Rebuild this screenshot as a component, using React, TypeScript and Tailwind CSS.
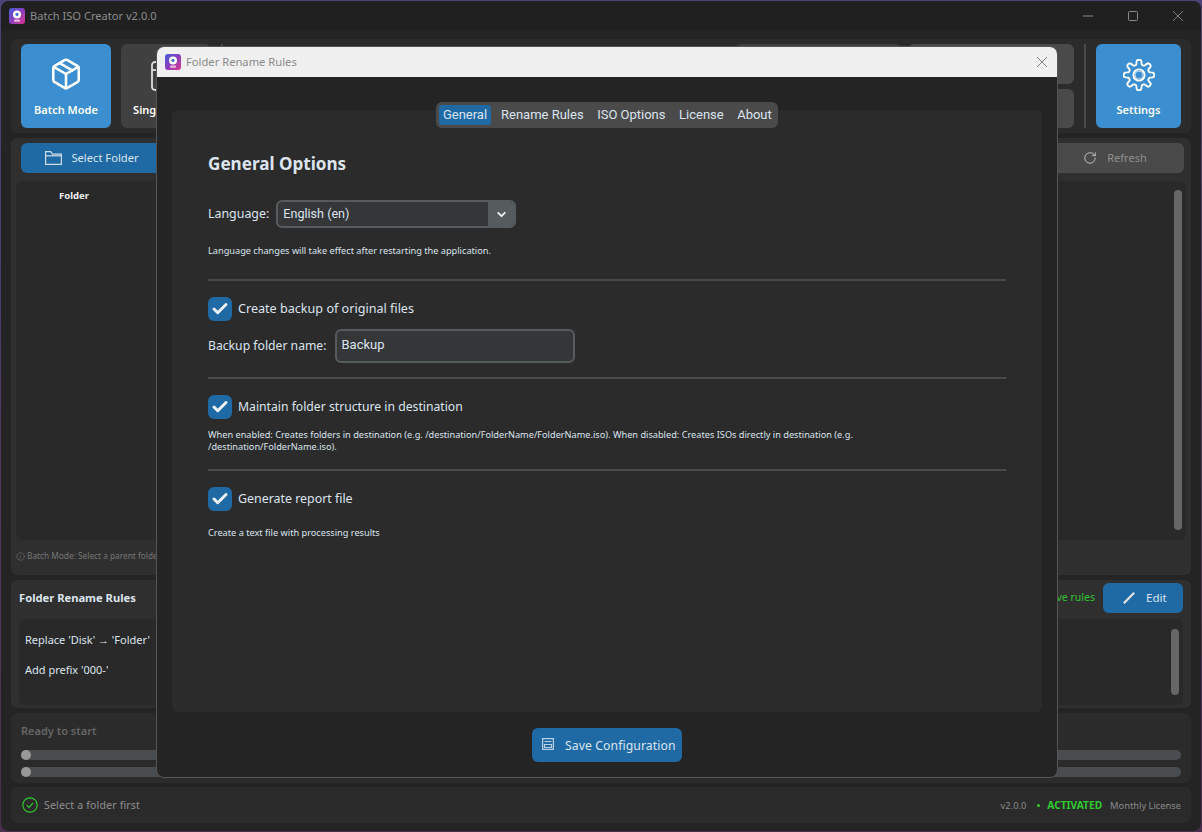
import { Check, ChevronDown, RotateCw, Package, Info } from 'lucide-react';

const ui = 'font-["Noto_Sans","Open_Sans",sans-serif]';
const rb = 'font-["Roboto",sans-serif]';

const Logo = () => (
  <div className="relative h-4 w-4 shrink-0 overflow-hidden rounded-[3px] bg-gradient-to-br from-[#3b5bd6] via-[#8a3cc0] to-[#e0288a]">
    <svg viewBox="0 0 16 16" className="h-4 w-4">
      <circle cx="8" cy="6.4" r="4" fill="#ffffff" />
      <circle cx="8" cy="6.4" r="1.6" fill="#4a6fe0" />
      <rect x="5" y="11.5" width="6" height="2.2" rx="0.6" fill="#e9b7d8" />
    </svg>
  </div>
);

// eight rounded lobes, sampled round the circle
const gearPath = Array.from({ length: 144 }, (_, i) => {
  const a = (i / 144) * Math.PI * 2;
  const r = 12.8 + 2.4 * (Math.tanh(2.2 * Math.cos(8 * a)) / Math.tanh(2.2));
  return `${i === 0 ? 'M' : 'L'}${(16 + r * Math.sin(a)).toFixed(2)} ${(16 - r * Math.cos(a)).toFixed(2)}`;
}).join('') + 'Z';

const GearIcon = () => (
  <svg viewBox="0 0 32 32" className="h-8 w-8" fill="none" stroke="#ffffff" strokeWidth="1.9" strokeLinejoin="round">
    <path d={gearPath} />
    <circle cx="16" cy="16" r="5.6" />
    <circle cx="16" cy="16" r="4" stroke="#bcd8f2" strokeWidth="1" />
  </svg>
);

const CheckRow = ({ label, size }: { label: string; size: string }) => (
  <div className="flex items-center gap-[6px]">
    <div className="flex h-6 w-6 items-center justify-center rounded-[6px] bg-[#1f6aa5]">
      <Check className="h-[18px] w-[18px] text-[#eef2f6]" strokeWidth={4} />
    </div>
    <span className={`${size} text-[#dce4ee] ${ui}`}>{label}</span>
  </div>
);

const Note = ({ children }: { children: React.ReactNode }) => (
  <p className={`text-[9.2px] leading-[12px] text-[#dce4ee] ${ui}`}>{children}</p>
);

const Divider = () => <div className="h-[2px] w-full bg-[#4a4a4a]" />;

const tabs = ['General', 'Rename Rules', 'ISO Options', 'License', 'About'];

const Modal = () => (
  <div className="absolute left-[156px] top-[46px] flex h-[732px] w-[902px] flex-col overflow-hidden rounded-[8px] border border-[#565656] bg-[#242424]">
    <div className="flex h-[30px] shrink-0 items-center bg-[#f0f0f0] pl-2 pr-[10px]">
      <Logo />
      <span className={`ml-[5px] text-[11.2px] text-[#8b8b8b] ${ui}`}>Folder Rename Rules</span>
      <svg viewBox="0 0 10 10" className="ml-auto h-[10px] w-[10px]" stroke="#777777" strokeWidth="0.9">
        <path d="M0 0L10 10M10 0L0 10" />
      </svg>
    </div>
    <div className="flex flex-1 flex-col items-center px-[15px]">
      <div className={`relative z-10 mb-[-18px] mt-[25px] flex h-[26px] w-[342px] items-center gap-[13.5px] rounded-[6px] bg-[#4a4a4a] pl-[3px] text-[13px] text-[#dce4ee] ${rb}`}>
        {tabs.map((t, i) => (
          <span key={t} className={i === 0 ? 'mr-[-3.5px] flex h-5 w-[52px] items-center justify-center rounded-[3px] bg-[#1f6aa5]' : 'flex h-5 items-center'}>
            {t}
          </span>
        ))}
      </div>
      <div className="h-[602px] w-full rounded-[6px] bg-[#2b2b2b] px-9 pt-[42px]">
        <h2 className={`text-[17.1px] font-bold leading-6 text-[#dce4ee] ${ui}`}>General Options</h2>
        <div className="mt-[24px] flex items-center gap-[7px]">
          <span className={`text-[12.4px] text-[#dce4ee] ${ui}`}>Language:</span>
          <div className="flex h-7 w-[240px] overflow-hidden rounded-[6px] border-2 border-[#565b5e] bg-[#343638]">
            <span className={`flex-1 pl-[5px] text-[12.6px] leading-6 text-[#dce4ee] ${rb}`}>English (en)</span>
            <div className="flex w-[26px] items-center justify-center bg-[#565b5e]">
              <ChevronDown className="h-[13px] w-[13px] text-[#eeeeee]" strokeWidth={3.5} />
            </div>
          </div>
        </div>
        <div className="mt-[17px]"><Note>Language changes will take effect after restarting the application.</Note></div>
        <div className="mt-[22px]"><Divider /></div>
        <div className="mt-[16px]"><CheckRow label="Create backup of original files" size="text-[12.6px]" /></div>
        <div className="mt-2 flex items-center gap-2">
          <span className={`text-[12.2px] text-[#dce4ee] ${ui}`}>Backup folder name:</span>
          <div className={`h-[34px] w-[240px] rounded-[6px] border-2 border-[#565b5e] bg-[#343638] pl-[5px] text-[13px] leading-[28px] text-[#dce4ee] ${rb}`}>Backup</div>
        </div>
        <div className="mt-[14px]"><Divider /></div>
        <div className="mt-[16px]"><CheckRow label="Maintain folder structure in destination" size="text-[12.2px]" /></div>
        <div className="mt-[10px] w-[700px]">
          <Note>When enabled: Creates folders in destination (e.g. /destination/FolderName/FolderName.iso). When disabled: Creates ISOs directly in destination (e.g. /destination/FolderName.iso).</Note>
        </div>
        <div className="mt-[16px]"><Divider /></div>
        <div className="mt-[16px]"><CheckRow label="Generate report file" size="text-[12.4px]" /></div>
        <div className="mt-4"><Note>Create a text file with processing results</Note></div>
      </div>
      <button className={`mt-4 flex h-[34px] w-[150px] items-center gap-[11px] rounded-[6px] bg-[#1f6aa5] pl-[10px] pt-[2px] text-[12.2px] tracking-[0.1px] text-[#dce4ee] ${ui}`}>
        <svg viewBox="0 0 12 12" className="mb-[4px] h-3 w-3" fill="none" stroke="#b9cfe2" strokeWidth="1.2">
          <rect x="0.6" y="0.6" width="10.8" height="10.8" />
          <path d="M2.5 3.5h7M2.5 6.5h7v3h-7z" />
        </svg>
        Save Configuration
      </button>
    </div>
  </div>
);

export default function App() {
  return (
    <div className={`relative h-[832px] w-[1202px] overflow-hidden bg-gradient-to-b from-[#4d4379] to-[#4a2f4e] p-[1px] ${ui}`}>
      <div className="flex h-full flex-col rounded-[8px] bg-[#242424]">
        <div className="flex h-[30px] shrink-0 items-center rounded-t-[8px] bg-[#202020] pl-[8px]">
          <Logo />
          <span className="ml-[5px] text-[11.1px] text-[#8c8c8c]">Batch ISO Creator v2.0.0</span>
          <div className="ml-auto flex items-center gap-[35px] pr-[18px]">
            <svg viewBox="0 0 10 10" className="h-[10px] w-[10px]" stroke="#8a8a8a" strokeWidth="1"><path d="M0 5H10" /></svg>
            <svg viewBox="0 0 10 10" className="h-[10px] w-[10px]" fill="none" stroke="#8a8a8a" strokeWidth="1"><rect x="0.5" y="0.5" width="9" height="9" rx="1" /></svg>
            <svg viewBox="0 0 10 10" className="h-[10px] w-[10px]" stroke="#8a8a8a" strokeWidth="0.9"><path d="M0 0L10 10M10 0L0 10" /></svg>
          </div>
        </div>

        <div className="mx-[10px] mt-[8px] flex h-[94px] shrink-0 items-center rounded-[6px] bg-[#2b2b2b] px-[10px]">
          <div className="flex h-[84px] w-[90px] flex-col items-center rounded-[6px] bg-[#3b8ed0] pt-[13px]">
            <Package className="h-[34px] w-[34px] text-white" strokeWidth={1.8} />
            <span className="mt-[11px] text-[11px] font-semibold text-white">Batch Mode</span>
          </div>
          <div className="ml-[10px] flex h-[84px] w-[90px] flex-col items-center rounded-[6px] bg-[#404040] pt-[17px]">
            <svg viewBox="0 0 30 30" className="h-[30px] w-[30px]" fill="none" stroke="#dddddd" strokeWidth="1.8">
              <rect x="1" y="1" width="28" height="28" rx="3" />
              <path d="M1 9H29" />
            </svg>
            <span className="mt-[11px] text-[11px] font-semibold text-white">Single Mode</span>
          </div>
          <div className="ml-[10px] h-[84px] w-[2px] bg-[#4a4a4a]" />
          <div className="ml-auto grid h-[84px] w-[339px] grid-cols-2 grid-rows-2 gap-x-[6px] gap-y-[5px]">
            <div className="rounded-[6px] bg-[#404040]" />
            <div className="rounded-[6px] bg-[#4a4a4a]" />
            <div className="rounded-[6px] bg-[#404040]" />
            <div className="rounded-[6px] bg-[#4a4a4a]" />
          </div>
          <div className="ml-[10px] h-[84px] w-[2px] bg-[#4a4a4a]" />
          <div className="ml-[10px] flex h-[84px] w-[85px] flex-col items-center rounded-[6px] bg-[#3b8ed0] pt-[15px]">
            <GearIcon />
            <span className="mt-[11px] text-[11px] font-semibold text-white">Settings</span>
          </div>
        </div>

        <div className="mx-[10px] mt-[5px] h-[437px] shrink-0 rounded-[6px] bg-[#2f2f2f] px-[5px] pt-[5px]">
          <div className="flex h-[30px] justify-between pl-[5px] pr-[2px]">
            <div className="flex w-[142px] items-center justify-center gap-[9px] rounded-[6px] bg-[#1f6aa5] text-[11.2px] text-[#dce4ee]">
              <svg viewBox="0 0 17 14" className="h-[14px] w-[17px]" fill="none" stroke="#cfdbe6" strokeWidth="1.2">
                <path d="M0.6 13.4V0.6h5.2l1.6 2.6h9v10.2z" />
                <path d="M0.6 4.8H16.4" />
              </svg>
              Select Folder
            </div>
            <div className="flex w-[138px] items-center justify-center gap-[10px] rounded-[6px] bg-[#4a4a4a] text-[11px] text-[#8f8f8f]">
              <RotateCw className="h-[14px] w-[14px] text-[#cccccc]" strokeWidth={1.5} />
              Refresh
            </div>
          </div>
          <div className="relative mt-2 flex h-[359px] justify-between rounded-[6px] bg-[#292929] pr-1 pt-[9px]">
            <span className="ml-[43px] text-[9.5px] font-bold leading-[12px] text-[#f0f0f0]">Folder</span>
            <div className="h-[340px] w-2 rounded-full bg-[#666666]" />
          </div>
          <div className="mt-[10px] flex items-center gap-[2px] text-[8.3px] leading-3 text-[#777777]">
            <Info className="h-[9px] w-[9px]" strokeWidth={1.5} />
            Batch Mode: Select a parent folder
          </div>
        </div>

        <div className="mx-[10px] mt-[5px] h-[128px] shrink-0 rounded-[6px] bg-[#2f2f2f] px-2 pt-[3px]">
          <div className="flex h-[30px] items-center justify-between">
            <span className="text-[11.2px] font-bold text-[#dce4ee]">Folder Rename Rules</span>
            <div className="flex items-center gap-2">
              <span className="text-[10.5px] text-[#2fc42f]">Active rules</span>
              <div className="flex h-[30px] w-[80px] items-center gap-[11px] rounded-[6px] bg-[#1f6aa5] pl-[20px] text-[11.5px] text-[#dce4ee]">
                <svg viewBox="0 0 12 12" className="h-3 w-3" stroke="#e4e4e4" strokeWidth="2.2">
                  <path d="M0.8 11.2L11.2 0.8" />
                </svg>
                Edit
              </div>
            </div>
          </div>
          <div className="mt-[6px] flex h-[86px] justify-between rounded-[6px] bg-[#292929] pl-[6px] pr-1 pt-[13px] text-[11px] text-[#dce4ee]">
            <div className="flex flex-col gap-[15px] leading-[15px]">
              <span>Replace 'Disk' → 'Folder'</span>
              <span>Add prefix '000-'</span>
            </div>
            <div className="mt-[-3px] h-[66px] w-2 rounded-full bg-[#666666]" />
          </div>
        </div>

        <div className="mx-[10px] mt-[5px] h-[70px] shrink-0 rounded-[6px] bg-[#2b2b2b] px-[10px] pt-[9px]">
          <span className="block text-[11px] font-semibold leading-[17px] text-[#666666]">Ready to start</span>
          <div className="mt-[11px] flex flex-col gap-[7px]">
            <div className="h-[10px] rounded-full bg-[#4a4d50]"><div className="h-[10px] w-[10px] rounded-full bg-[#999999]" /></div>
            <div className="h-[10px] rounded-full bg-[#4a4d50]"><div className="h-[10px] w-[10px] rounded-full bg-[#999999]" /></div>
          </div>
        </div>

        <div className="mx-[10px] mt-[4px] flex h-[36px] shrink-0 items-center rounded-[6px] bg-[#2b2b2b] pl-[11px] pr-[10px]">
          <svg viewBox="0 0 16 16" className="h-4 w-4" fill="none" stroke="#2ecc2e" strokeWidth="1.2">
            <circle cx="8" cy="8" r="7.2" />
            <path d="M4.8 8.2l2.2 2.2 4.2-4.6" />
          </svg>
          <span className="ml-[6px] pt-[1px] text-[10.6px] tracking-[0.15px] text-[#8f8f8f]">Select a folder first</span>
          <div className="ml-auto flex items-center pt-[1px] text-[9.3px]">
            <span className="text-[#8a8a8a]">v2.0.0</span>
            <span className="ml-[11px] h-[3px] w-[3px] rounded-full bg-[#2ecc2e]" />
            <span className="ml-[7px] text-[10.2px] font-bold text-[#2ecc2e]">ACTIVATED</span>
            <span className="ml-2 text-[#8a8a8a]">Monthly License</span>
          </div>
        </div>
      </div>
      <Modal />
    </div>
  );
}
